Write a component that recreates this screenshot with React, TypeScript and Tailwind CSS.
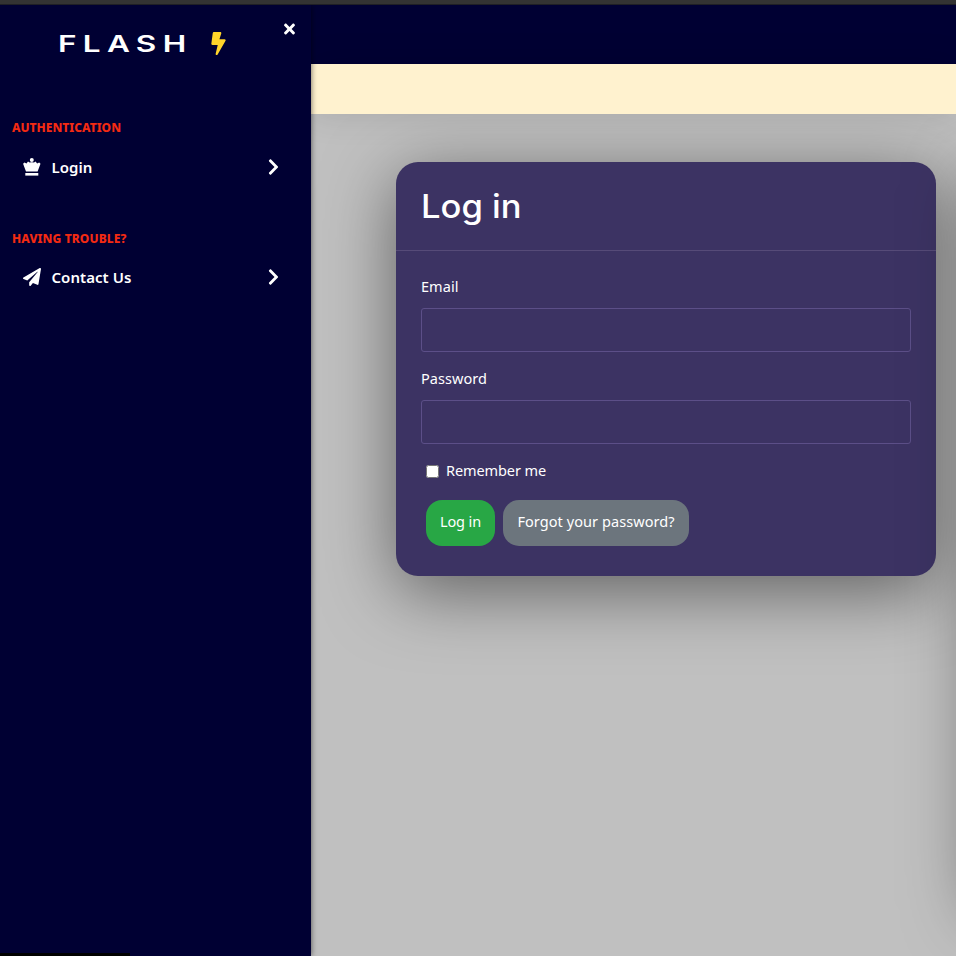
import type { ReactNode } from "react";
import { FaBolt, FaPaperPlane, FaTimes, FaChevronRight } from "react-icons/fa";

function Crown() {
  return (
    <svg viewBox="0 0 18 18" className="h-[18px] w-[18px]" fill="currentColor">
      <circle cx="8.8" cy="2" r="2" />
      <path d="M.1 5.7 1.4 4.6 3.5 5.4 5 3.6 6.6 4.4 8.8 4.2 11 4.4 12.6 3.6 14.1 5.4 16.2 4.6 17.5 5.7 14.6 13.6H3z" />
      <path d="M2.3 15h13v2.6h-13z" />
    </svg>
  );
}

function NavItem({ icon, label }: { icon: ReactNode; label: ReactNode }) {
  return (
    <a className="flex h-[38px] items-center pl-[23px] pr-[31px] text-white">
      <span className="w-[28.5px]">{icon}</span>
      <span className="flex-1 whitespace-nowrap text-[15px] font-semibold tracking-[0.05px]">{label}</span>
      <FaChevronRight className="mb-px h-[18px] w-[13px]" />
    </a>
  );
}

function Field({ label, type }: { label: string; type: string }) {
  return (
    <label className="mb-4 block h-[76px]">
      <span className="block h-[32px] text-[14.5px] leading-[20px] tracking-[0.05px]">{label}</span>
      <input type={type} className="block h-11 w-full rounded-[3px] border border-[#5c4f88] bg-transparent px-3 outline-none" />
    </label>
  );
}

export default function App() {
  return (
    <div className="flex h-[956px] w-[956px] flex-col overflow-hidden bg-[#c0c0c0] font-['Noto_Sans',sans-serif]">
      <div className="z-30 h-[5px] shrink-0 border-b border-[#1f1f25] bg-[#333333]" />
      <div className="flex min-h-0 flex-1">
        <aside className="z-20 flex w-[311px] shrink-0 flex-col bg-[#000033] shadow-[0_0_6px_rgba(0,0,0,0.6)]">
          <div className="flex h-[114px] pl-[58px] pr-[15px] text-white">
            <div className="w-[152px] pt-[23px]">
              <span className="inline-block origin-left scale-x-[1.37] whitespace-nowrap font-['Inter',sans-serif] text-[23px] font-semibold leading-[32px] tracking-[4.6px]">FLASH</span>
            </div>
            <FaBolt className="mt-[27px] h-[23px] w-[17px] text-[#ffd42a]" />
            <FaTimes className="ml-auto mt-[16px] h-[16px] w-[13px]" />
          </div>
          <h2 className="h-[29px] pl-3 text-[12px] font-extrabold leading-[18px] text-[#f32a12]">AUTHENTICATION</h2>
          <NavItem icon={<Crown />} label="Login" />
          <h2 className="mt-[44px] h-[28px] pl-3 text-[12px] font-extrabold leading-[18px] tracking-[0.1px] text-[#f32a12]">HAVING TROUBLE?</h2>
          <NavItem icon={<FaPaperPlane className="mb-px h-[18px] w-[18px]" />} label="Contact Us" />
          <div className="mt-auto h-[3px] w-[130px] bg-black" />
        </aside>
        <div className="flex min-w-0 flex-1 flex-col">
          <header className="z-10 h-[59px] shrink-0 bg-[#000033]" />
          <div className="z-10 h-[50px] shrink-0 bg-[#fff2cf] shadow-[0_0_35px_rgba(0,0,0,0.12)]" />
          <main className="flex min-h-0 flex-1 items-start gap-[42px] overflow-hidden pl-[85px] pt-12">
            <section className="h-[414px] w-[540px] shrink-0 rounded-[22px] bg-[#3c3363] text-[#ffffff] shadow-[0_15px_70px_rgba(0,0,0,0.5)]">
              <div className="h-[89px] border-b border-[#564b78] pl-[25px] pt-[24px]">
                <h1 className="origin-left scale-x-[1.08] font-['Inter',sans-serif] text-[32px] font-medium leading-[42px]">Log in</h1>
              </div>
              <form className="px-[25px] pt-[25px]">
                <Field label="Email" type="email" />
                <Field label="Password" type="password" />
                <label className="flex h-[22px] items-center pl-[5px] text-[14.5px] tracking-[-0.1px]">
                  <input type="checkbox" className="mr-[7px] h-[13px] w-[13px]" />
                  <span>Remember me</span>
                </label>
                <div className="mt-[18px] flex gap-2 pl-[5px] text-[14.5px]">
                  <button type="button" className="h-[46px] w-[69px] whitespace-nowrap rounded-[16px] bg-[#28a745] pb-[3px] tracking-[-0.1px]">Log in</button>
                  <button type="button" className="h-[46px] w-[186px] whitespace-nowrap rounded-[16px] bg-[#6c757d] pb-[3px] tracking-[0.07px]">Forgot your password?</button>
                </div>
              </form>
            </section>
            <section className="h-[740px] w-[540px] shrink-0 rounded-[22px] bg-[#3c3363] shadow-[0_15px_70px_rgba(0,0,0,0.5)]" />
          </main>
        </div>
      </div>
    </div>
  );
}
